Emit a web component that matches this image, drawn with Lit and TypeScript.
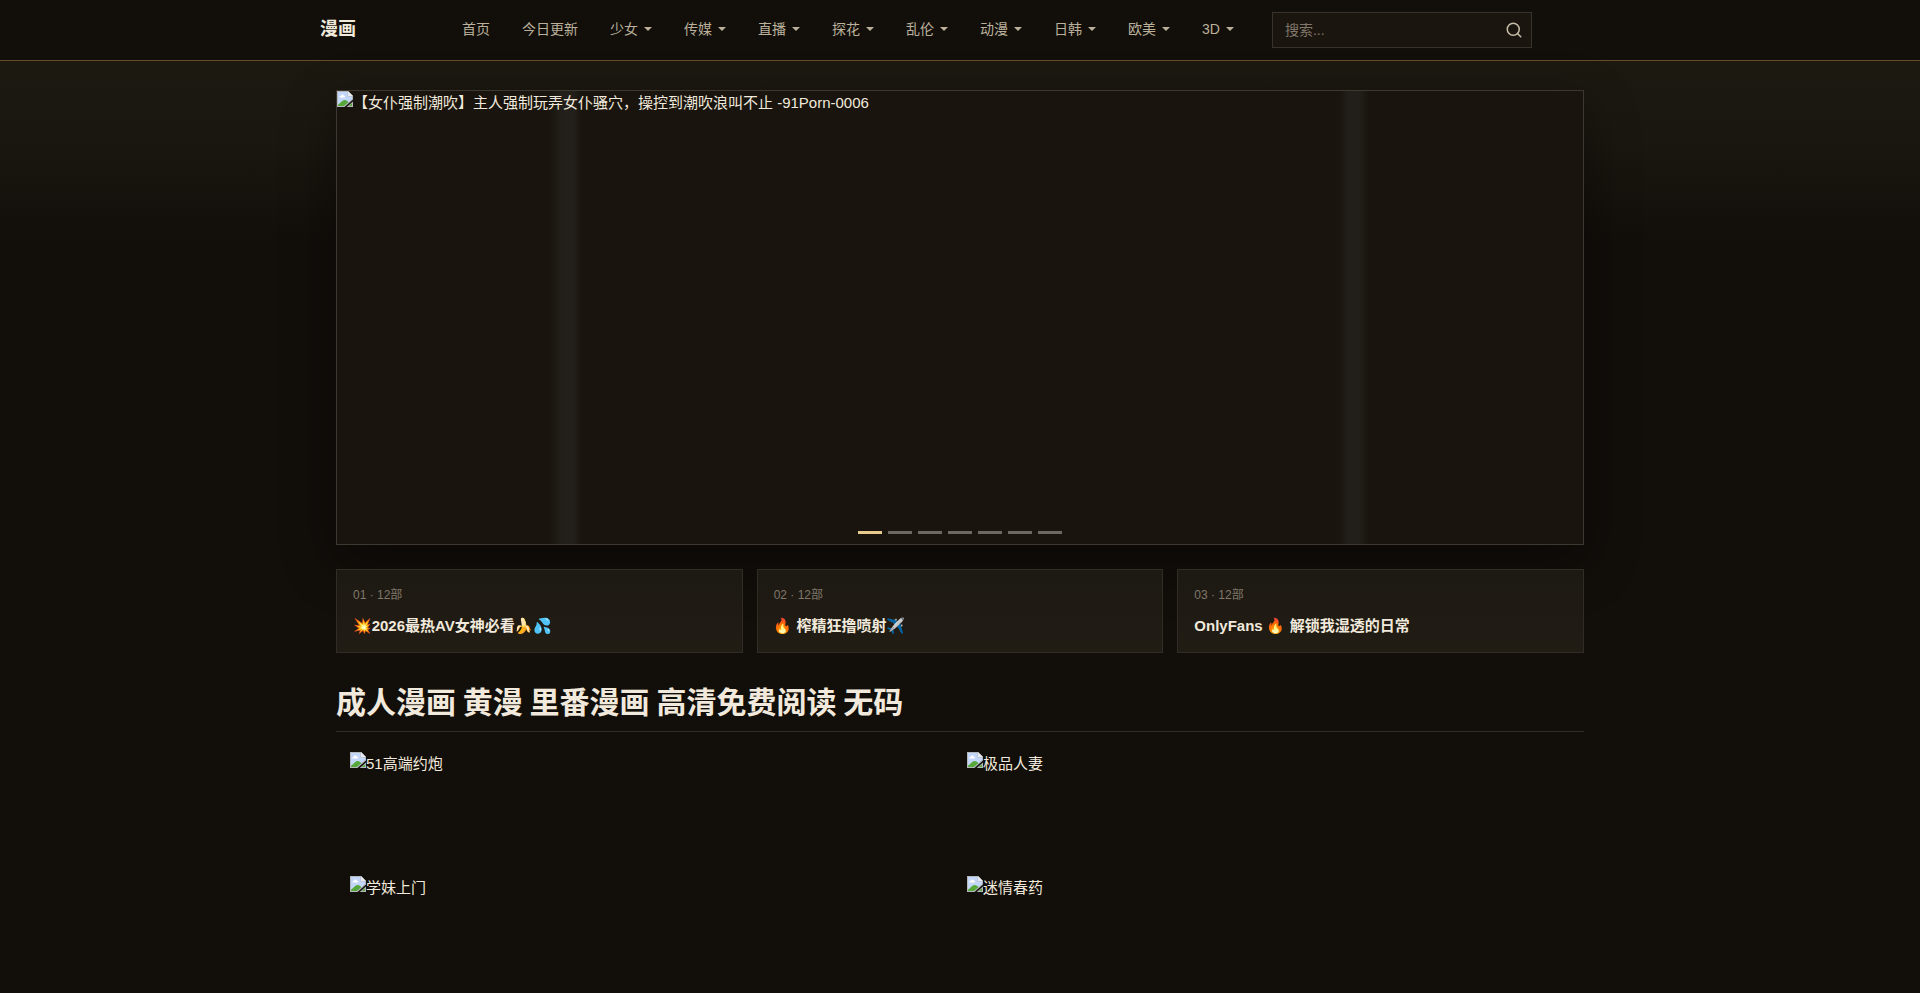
import { LitElement, html, css } from "lit";
import { customElement, state } from "lit/decorators.js";
import { classMap } from "lit/directives/class-map.js";

const NAV: { label: string; menu: boolean }[] = [
  { label: "首页", menu: false },
  { label: "今日更新", menu: false },
  { label: "少女", menu: true },
  { label: "传媒", menu: true },
  { label: "直播", menu: true },
  { label: "探花", menu: true },
  { label: "乱伦", menu: true },
  { label: "动漫", menu: true },
  { label: "日韩", menu: true },
  { label: "欧美", menu: true },
  { label: "3D", menu: true },
];

const TOPICS = [
  { meta: "01 · 12部", title: "💥2026最热AV女神必看🍌💦" },
  { meta: "02 · 12部", title: "🔥 榨精狂撸喷射✈️" },
  { meta: "03 · 12部", title: "OnlyFans 🔥 解锁我湿透的日常" },
];

const BANNERS = ["51高端约炮", "极品人妻", "学妹上门", "迷情春药"];
const SLIDES = [0, 1, 2, 3, 4, 5, 6];

@customElement("missing-picture")
export class MissingPicture extends LitElement {
  static properties = { label: { type: String } };
  declare label: string;

  static styles = css`
    :host {
      display: flex;
      align-items: flex-start;
      line-height: 23px;
    }
    .icon {
      flex: none;
      width: 16px;
      height: 16px;
    }
  `;

  render() {
    return html`
      <svg class="icon" viewBox="0 0 16 16" aria-hidden="true">
        <path d="M0 0H11L16 5V8.5L7.5 16H0Z" fill="#b4b7bb" />
        <path d="M1 1H10.5V5.5H15V8L7 15H1Z" fill="#c3d7fb" />
        <path d="M2.5 6C2.5 4.8 3.6 4.6 4 4.7C4.3 3.2 6.6 3.2 6.9 4.8C8 4.7 8.3 6 8 6.5H2.8Z" fill="#fff" />
        <path d="M1 15V13.5C3 13 5 9 7.5 9C9.5 9 10.5 10 11.3 11.2L7 15Z" fill="#56a83a" />
        <path d="M11 0L16 5H11Z" fill="#e9ebee" />
        <path d="M16 10.5V16H9.7Z" fill="#b4b7bb" />
        <path d="M15 12.3V15H11.8Z" fill="#56a83a" />
      </svg>
      <span>${this.label}</span>
    `;
  }
}

@customElement("app-root")
export class AppRoot extends LitElement {
  @state() private slide = 0;

  static styles = css`
    :host {
      display: block;
      min-height: 100vh;
      box-sizing: border-box;
      color: #f1e9dc;
      background: linear-gradient(180deg, #1d1a11 0, #1a1710 140px, #120e0a 240px) #120e0a;
      font: 15px/24px "Liberation Sans", "Noto Sans CJK SC", "Noto Color Emoji", sans-serif;
      overflow: hidden;
    }
    *,
    *::before {
      box-sizing: border-box;
    }
    a {
      color: inherit;
      text-decoration: none;
    }
    .bar {
      background: #120f0b;
      border-bottom: 1px solid #644c2c;
    }
    .bar-inner {
      max-width: 1280px;
      height: 60px;
      margin: 0 auto;
      display: flex;
      align-items: center;
    }
    .logo {
      flex: 0 0 126px;
      padding-bottom: 2px;
      font-size: 18px;
      font-weight: 700;
    }
    .nav {
      display: flex;
      padding-bottom: 2px;
    }
    .nav-link {
      display: flex;
      align-items: center;
      gap: 6px;
      padding: 0 16px;
      font-size: 14px;
      color: #bbb19b;
      white-space: nowrap;
    }
    .caret {
      border: 4px solid transparent;
      border-top-color: currentColor;
      border-bottom: 0;
    }
    .search {
      display: flex;
      align-items: center;
      width: 260px;
      height: 36px;
      margin-left: 22px;
      border: 1px solid #37322a;
      background: #1b150f;
    }
    .search-input {
      flex: 1;
      min-width: 0;
      height: 100%;
      padding: 0 12px;
      border: 0;
      outline: 0;
      background: none;
      color: inherit;
      font: inherit;
      font-size: 14px;
    }
    .search-input::placeholder {
      color: #80776a;
      opacity: 1;
    }
    .search-button {
      display: flex;
      padding: 8px;
      border: 0;
      background: none;
      color: #c8bda8;
      cursor: pointer;
    }
    .page {
      max-width: 1280px;
      margin: 0 auto;
      padding: 29px 16px 24px;
    }
    .hero {
      position: relative;
      height: 455px;
      border: 1px solid #3e3930;
      background: linear-gradient(
        90deg,
        #19140e 0,
        #19140e 17%,
        #221e19 18%,
        #231f1a 19%,
        #19140e 19.6%,
        #19140e 80.4%,
        #221e19 81.2%,
        #231f1a 82%,
        #19140e 82.8%,
        #19140e 100%
      );
      box-shadow: 0 18px 48px rgba(0, 0, 0, 0.42);
    }
    .dots {
      position: absolute;
      left: 0;
      right: 0;
      bottom: 10px;
      display: flex;
      justify-content: center;
      gap: 6px;
    }
    .dot {
      width: 24px;
      height: 3px;
      padding: 0;
      border: 0;
      background: #6c6862;
      cursor: pointer;
    }
    .dot.active {
      background: #e8ca8c;
    }
    .topics {
      position: relative;
      display: grid;
      grid-template-columns: repeat(3, 1fr);
      gap: 14px;
      margin-top: 24px;
    }
    .topic {
      display: flex;
      flex-direction: column;
      gap: 10px;
      padding: 16px 16px 14px;
      border: 1px solid #312d26;
      background: linear-gradient(180deg, #1d1a13, #211c14);
    }
    .topic-meta {
      font-size: 12px;
      line-height: 18px;
      color: #80776a;
    }
    .topic-title {
      margin: 0;
      font-size: 15px;
      line-height: 24px;
    }
    .heading {
      margin: 24px 0 0;
      padding-bottom: 8px;
      border-bottom: 1px solid #2f2b26;
      font-family: "Noto Sans CJK SC", sans-serif;
      font-size: 30px;
      line-height: 46px;
    }
    .banners {
      display: grid;
      grid-template-columns: repeat(2, 1fr);
      grid-auto-rows: 110px;
      gap: 14px;
      padding: 20px 14px 0;
    }
  `;

  render() {
    return html`
      <header class="bar">
        <div class="bar-inner">
          <a class="logo" href="#">漫画</a>
          <nav class="nav">
            ${NAV.map(
              (item) => html`<a class="nav-link" href="#">${item.label}${item.menu ? html`<span class="caret"></span>` : ""}</a>`
            )}
          </nav>
          <form class="search" role="search" @submit=${(e: Event) => e.preventDefault()}>
            <input class="search-input" type="text" placeholder="搜索..." aria-label="搜索" />
            <button class="search-button" type="submit" aria-label="搜索">
              <svg width="18" height="18" viewBox="0 0 24 24" fill="none" stroke="currentColor" stroke-width="2" stroke-linecap="round">
                <circle cx="11" cy="11" r="8" />
                <path d="m21 21-4.35-4.35" />
              </svg>
            </button>
          </form>
        </div>
      </header>
      <main class="page">
        <section class="hero">
          <a href="#"><missing-picture label="【女仆强制潮吹】主人强制玩弄女仆骚穴，操控到潮吹浪叫不止 -91Porn-0006"></missing-picture></a>
          <div class="dots">
            ${SLIDES.map(
              (i) => html`<button
                class=${classMap({ dot: true, active: i === this.slide })}
                aria-label=${String(i + 1)}
                @click=${() => (this.slide = i)}
              ></button>`
            )}
          </div>
        </section>
        <section class="topics">
          ${TOPICS.map(
            (t) => html`<a class="topic" href="#">
              <span class="topic-meta">${t.meta}</span>
              <h3 class="topic-title">${t.title}</h3>
            </a>`
          )}
        </section>
        <h1 class="heading">成人漫画 黄漫 里番漫画 高清免费阅读 无码</h1>
        <section class="banners">
          ${BANNERS.map((b) => html`<a href="#"><missing-picture label=${b}></missing-picture></a>`)}
        </section>
      </main>
    `;
  }
}
